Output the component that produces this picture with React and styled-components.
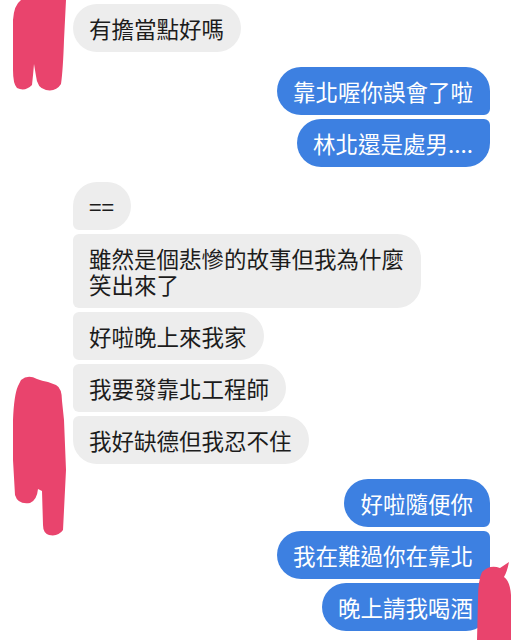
import React from 'react';
import styled, { createGlobalStyle, css } from 'styled-components';

const GlobalStyle = createGlobalStyle`
body{
    margin:0;
    background:#ffffff;
    font-family:"Noto Sans CJK TC","Noto Sans",sans-serif;
}
`;

const messages = [
    { side: 'left', items: [['有擔當點好嗎']] },
    { side: 'right', items: [['靠北喔你誤會了啦'], ['林北還是處男....']] },
    {
        side: 'left',
        items: [
            ['=='],
            ['雖然是個悲慘的故事但我為什麼', '笑出來了'],
            ['好啦晚上來我家'],
            ['我要發靠北工程師'],
            ['我好缺德但我忍不住'],
        ],
    },
    { side: 'right', items: [['好啦隨便你'], ['我在難過你在靠北'], ['晚上請我喝酒']] },
];

const position = (i, n) => {
    if (n === 1) return 'single';
    if (i === 0) return 'first';
    if (i === n - 1) return 'last';
    return 'middle';
};

const App = () =>
{
    return (
        <>
            <GlobalStyle />
            <Chat>
                {messages.map((group, g) => (
                    <Group key={g} $side={group.side}>
                        {group.items.map((lines, i) => (
                            <Bubble
                                key={i}
                                $side={group.side}
                                $pos={position(i, group.items.length)}
                            >
                                {lines.map((line, l) => (
                                    <Line key={l}>{line}</Line>
                                ))}
                            </Bubble>
                        ))}
                    </Group>
                ))}

                {/* pink marker scribbles over the avatars */}
                <Scribble $left={0} $top={0} width="80" height="95" viewBox="0 0 80 95">
                    <path d="M21,0 L66,0 L64,40 Q63,70 61,84 Q56,92 46,90 Q37,88 36,76 L34,64 Q33,76 32,85 Q25,92 17,88 Q13,84 13,70 L13,20 Q14,5 21,0 Z" />
                </Scribble>
                <Scribble $left={0} $top={370} width="80" height="170" viewBox="0 0 80 170">
                    <path d="M21,10 Q28,4 37,9 Q42,11 48,12 L56,15 Q62,18 62,31 L64,50 L66,100 L64,140 L63,160 Q58,167 49,165 Q43,163 43,155 L42,121 L38,119 Q37,130 30,133 Q18,135 15,125 L13,90 L13,50 Q14,25 18,16 Z" />
                </Scribble>
                <Scribble $left={460} $top={550} width="57" height="90" viewBox="0 0 57 90">
                    <path d="M22,22 Q30,14 40,18 L49,12 Q47,22 44,27 Q50,31 51,45 L51,90 L17,90 L18,50 Q18,30 22,22 Z" />
                </Scribble>
            </Chat>
        </>
    );
};

//Styled Components
const Chat = styled.div`
position:relative;
height:640px;
overflow:hidden;
display:flex;
flex-direction:column;
gap:15px;
padding-top:4px;
box-sizing:border-box;
`;

const Group = styled.div`
display:flex;
flex-direction:column;
gap:4px;
align-items:${(p) => (p.$side === 'left' ? 'flex-start' : 'flex-end')};
padding:${(p) => (p.$side === 'left' ? '0 0 0 73px' : '0 27px 0 0')};
`;

const big = '24px';
const small = '6px';

const leftRadius = {
    single: css`border-radius:${big};`,
    first: css`border-radius:${big} ${big} ${big} ${small};`,
    middle: css`border-radius:${small} ${big} ${big} ${small};`,
    last: css`border-radius:${small} ${big} ${big} ${big};`,
};

const rightRadius = {
    single: css`border-radius:${big};`,
    first: css`border-radius:${big} ${big} ${small} ${big};`,
    middle: css`border-radius:${big} ${small} ${small} ${big};`,
    last: css`border-radius:${big} ${small} ${big} ${big};`,
};

const Bubble = styled.div`
padding:11px 17px 11px 16px;
font-size:22.5px;
line-height:26px;
white-space:nowrap;
background:${(p) => (p.$side === 'left' ? '#ededed' : '#3d80e1')};
color:${(p) => (p.$side === 'left' ? '#1c1c1c' : '#ffffff')};
${(p) => (p.$side === 'left' ? leftRadius[p.$pos] : rightRadius[p.$pos])}
`;

const Line = styled.div``;

const Scribble = styled.svg`
position:absolute;
left:${(p) => p.$left}px;
top:${(p) => p.$top}px;
fill:#e9446d;
`;

export default App;
